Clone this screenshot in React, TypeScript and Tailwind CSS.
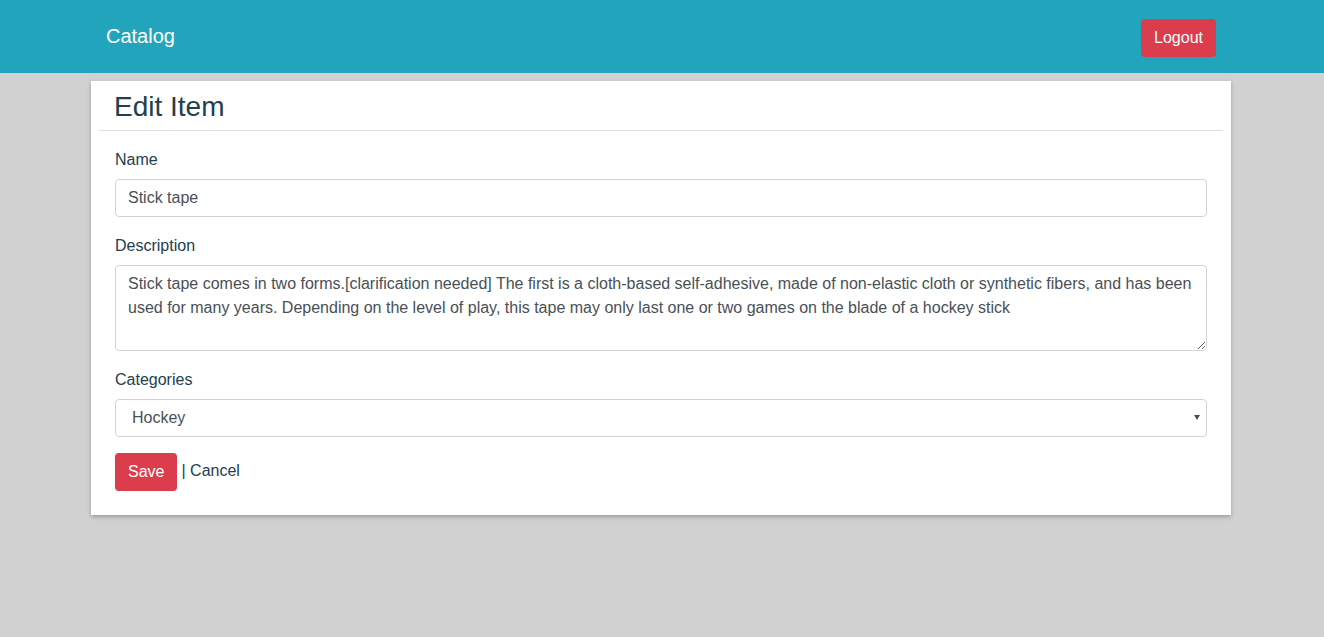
import { useState } from "react";

const description =
  "Stick tape comes in two forms.[clarification needed] The first is a cloth-based self-adhesive, made of non-elastic cloth or synthetic fibers, and has been used for many years. Depending on the level of play, this tape may only last one or two games on the blade of a hockey stick";

export default function App(): React.JSX.Element {
  const [name, setName] = useState("Stick tape");
  const [desc, setDesc] = useState(description);
  const [category, setCategory] = useState("Hockey");

  return (
    <div className="min-h-[637px] bg-[#d1d1d1] font-['Liberation_Sans',Arial,sans-serif] text-base leading-6 text-[#22404f]">
      <nav className="h-[73px] bg-[#22a5bc]">
        <div className="ml-[calc(50%-556px)] flex w-[1110px] items-start justify-between">
          <a href="#" className="mt-[23px] text-[20px] leading-[26px] text-white">
            Catalog
          </a>
          <button className="mt-[19px] h-[38px] rounded bg-[#dc3d4c] px-[13px] text-white">
            Logout
          </button>
        </div>
      </nav>

      <main className="mt-2 ml-[calc(50%-571px)] w-[1140px] bg-white p-2 shadow-[0_2px_4px_rgba(0,0,0,0.25)]">
        <h2 className="mb-[7px] px-[15px] pt-px text-[28px] leading-[33px] text-[#213f4e]">Edit Item</h2>
        <hr className="border-t border-[#dfe1e8]" />
        <form className="px-4 pt-4 pb-4" onSubmit={(e) => e.preventDefault()}>
          <div className="mb-4">
            <label className="mb-[7px] block pt-px">Name</label>
            <input
              value={name}
              onChange={(e) => setName(e.target.value)}
              className="block h-[38px] w-full rounded border border-[#ced4da] px-3 text-[#495057] outline-none"
            />
          </div>
          <div className="mb-4">
            <label className="mb-[7px] block pt-px">Description</label>
            <textarea
              value={desc}
              onChange={(e) => setDesc(e.target.value)}
              className="block h-[86px] w-full rounded border border-[#ced4da] px-3 py-[6px] text-[#495057] outline-none"
            />
          </div>
          <div className="mb-4">
            <label className="mb-[7px] block pt-px">Categories</label>
            <div className="relative">
              <select
                value={category}
                onChange={(e) => setCategory(e.target.value)}
                className="block h-[38px] w-full appearance-none rounded border border-[#ced4da] bg-white pr-3 pl-4 text-[#495057] outline-none"
              >
                <option>Hockey</option>
                <option>Soccer</option>
                <option>Basketball</option>
              </select>
              <svg className="pointer-events-none absolute top-[16px] right-[7px]" width="6" height="5" viewBox="0 0 6 5">
                <path d="M0 0h6L3 5z" fill="#4a4f55" />
              </svg>
            </div>
          </div>
          <div className="flex items-center">
            <button className="h-[38px] rounded bg-[#dc3d4c] px-[13px] text-white">Save</button>
            <span className="ml-1 -mt-[2px]">
              | <a href="#">Cancel</a>
            </span>
          </div>
        </form>
      </main>
    </div>
  );
}
